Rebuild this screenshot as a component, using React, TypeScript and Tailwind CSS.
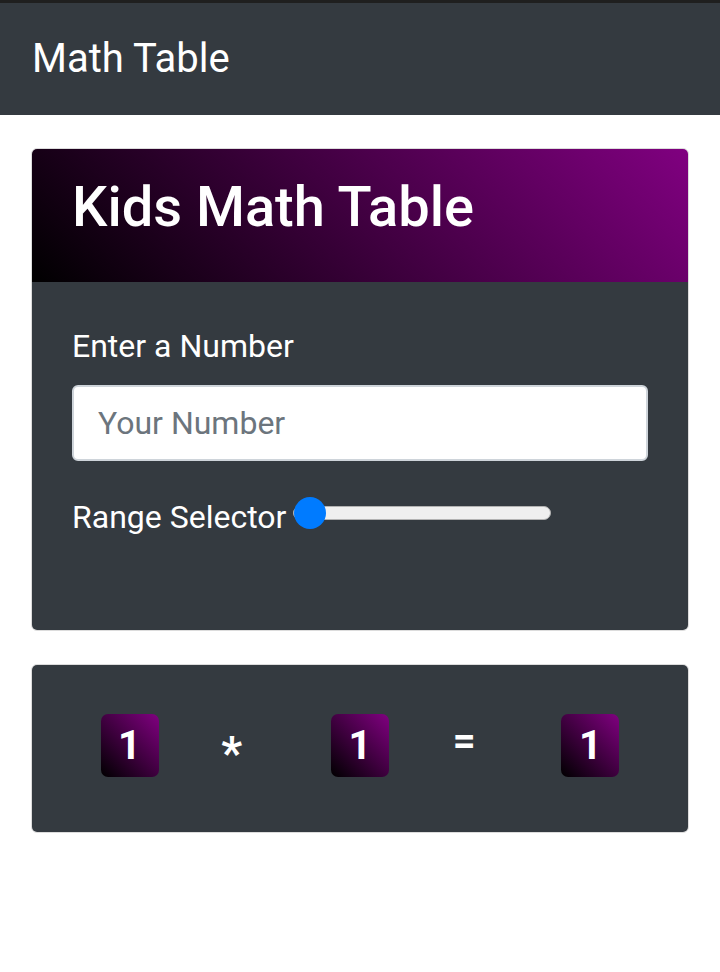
import React, { useState } from 'react';

const NumberTile: React.FC<{ value: number }> = ({ value }) => (
  <div className="w-[58px] h-[63px] rounded-[7px] bg-[linear-gradient(45deg,#000000,#800080)] flex items-center justify-center">
    <span className="text-white font-bold text-[40px] leading-none">{value}</span>
  </div>
);

const App: React.FC = () => {
  const [num, setNum] = useState('');
  const [range, setRange] = useState(1);
  const base = parseInt(num, 10) || 1;

  return (
    <div className="min-h-screen bg-white font-['Roboto',sans-serif]">
      {/* Navbar */}
      <nav className="bg-[#343a40] border-t-[3px] border-[#1f1f1f] h-[115px] flex items-center px-[32px]">
        <span className="text-white text-[40px] leading-none pb-[1px]">Math Table</span>
      </nav>

      <div className="px-[31px] pt-[33px]">
        {/* Input card */}
        <div className="border border-[#dcdcdc] rounded-[6px] overflow-hidden">
          <div className="h-[133px] bg-[linear-gradient(45deg,#000000,#800080)] pl-[40px] pt-[25px]">
            <h1 className="text-white text-[56px] font-medium leading-[1.2]">Kids Math Table</h1>
          </div>
          <div className="bg-[#343a40] px-[40px] pt-[45px] pb-[93px]">
            <label className="block text-white text-[32px] leading-[1.2] mb-[20px]">Enter a Number</label>
            <input
              type="number"
              value={num}
              onChange={(e) => setNum(e.target.value)}
              placeholder="Your Number"
              className="w-full h-[76px] rounded-[6px] border-[2px] border-[#ced4da] bg-white px-[24px] text-[32px] text-[#495057] placeholder-[#6c757d] outline-none"
            />
            <div className="flex items-center mt-[37px]">
              <span className="text-white text-[32px] leading-[1.2]">Range Selector</span>
              <input
                type="range"
                min={1}
                max={10}
                value={range}
                onChange={(e) => setRange(Number(e.target.value))}
                className="ml-[7px] mb-[10px] w-[258px] h-[14px] appearance-none rounded-full bg-[#efefef] border border-[#b2b2b2] outline-none [&::-webkit-slider-thumb]:appearance-none [&::-webkit-slider-thumb]:w-[32px] [&::-webkit-slider-thumb]:h-[32px] [&::-webkit-slider-thumb]:rounded-full [&::-webkit-slider-thumb]:bg-[#007bff] [&::-webkit-slider-thumb]:border-0"
              />
            </div>
          </div>
        </div>

        {/* Result card */}
        <div className="mt-[33px] border border-[#dcdcdc] rounded-[6px] overflow-hidden">
          <div className="bg-[#343a40] h-[167px] px-[40px] pb-[5px] grid grid-cols-5 items-center">
            <div className="flex justify-center"><NumberTile value={base} /></div>
            <div className="flex justify-center pr-[26px] pt-[14px]">
              <span className="text-white font-bold text-[46px] leading-none">*</span>
            </div>
            <div className="flex justify-center"><NumberTile value={range} /></div>
            <div className="flex justify-center pr-[22px] pb-[10px]">
              <span className="text-white font-bold text-[40px] leading-none">=</span>
            </div>
            <div className="flex justify-center"><NumberTile value={base * range} /></div>
          </div>
        </div>
      </div>
    </div>
  );
};

export default App;
